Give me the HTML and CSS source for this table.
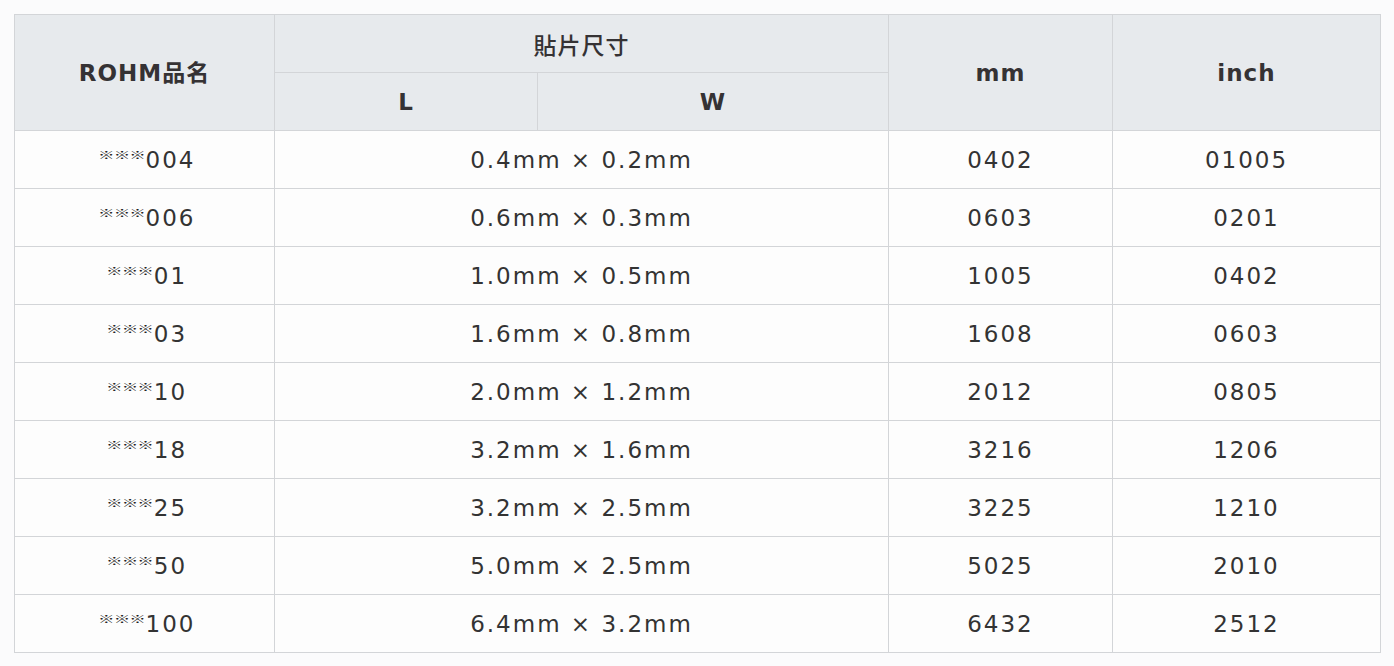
FILE: index.html
```html
<!DOCTYPE html>
<html lang="zh">
<head>
<meta charset="utf-8">
<title>ROHM 贴片尺寸</title>
<link rel="stylesheet" href="styles.css">
</head>
<body>
<table class="size-table">
  <colgroup>
    <col class="c-name">
    <col class="c-l">
    <col class="c-w">
    <col class="c-mm">
    <col class="c-inch">
  </colgroup>
  <thead>
    <tr class="hrow1">
      <th rowspan="2">ROHM品名</th>
      <th colspan="2" class="group">貼片尺寸</th>
      <th rowspan="2">mm</th>
      <th rowspan="2">inch</th>
    </tr>
    <tr class="hrow2">
      <th>L</th>
      <th>W</th>
    </tr>
  </thead>
  <tbody>
    <tr><td><span class="mark">※※※</span>004</td><td colspan="2">0.4mm × 0.2mm</td><td>0402</td><td>01005</td></tr>
    <tr><td><span class="mark">※※※</span>006</td><td colspan="2">0.6mm × 0.3mm</td><td>0603</td><td>0201</td></tr>
    <tr><td><span class="mark">※※※</span>01</td><td colspan="2">1.0mm × 0.5mm</td><td>1005</td><td>0402</td></tr>
    <tr><td><span class="mark">※※※</span>03</td><td colspan="2">1.6mm × 0.8mm</td><td>1608</td><td>0603</td></tr>
    <tr><td><span class="mark">※※※</span>10</td><td colspan="2">2.0mm × 1.2mm</td><td>2012</td><td>0805</td></tr>
    <tr><td><span class="mark">※※※</span>18</td><td colspan="2">3.2mm × 1.6mm</td><td>3216</td><td>1206</td></tr>
    <tr><td><span class="mark">※※※</span>25</td><td colspan="2">3.2mm × 2.5mm</td><td>3225</td><td>1210</td></tr>
    <tr><td><span class="mark">※※※</span>50</td><td colspan="2">5.0mm × 2.5mm</td><td>5025</td><td>2010</td></tr>
    <tr><td><span class="mark">※※※</span>100</td><td colspan="2">6.4mm × 3.2mm</td><td>6432</td><td>2512</td></tr>
  </tbody>
</table>
</body>
</html>
```

FILE: styles.css
```css
html, body {
  margin: 0;
  padding: 0;
  background: #fbfbfc;
}
body {
  padding: 14px;
  font-family: "DejaVu Sans", "Noto Sans CJK TC", sans-serif;
  color: #333;
}
.size-table {
  border-collapse: collapse;
  table-layout: fixed;
  width: 1366px;
}
.c-name { width: 260px; }
.c-l { width: 263px; }
.c-w { width: 351px; }
.c-mm { width: 224px; }
.c-inch { width: 268px; }

.size-table th,
.size-table td {
  border: 1px solid #d3d5d8;
  text-align: center;
  vertical-align: middle;
  padding: 0;
}
.size-table th {
  background: #e7eaed;
  font-weight: bold;
  font-size: 23px;
  line-height: 28px;
  letter-spacing: 1px;
  color: #353234;
}
.hrow1 th { height: 57px; }
.hrow2 th { height: 57px; }
.hrow1 .group {
  font-weight: 500;
  font-family: "Noto Sans CJK TC", sans-serif;
  letter-spacing: 1px;
}
.size-table td {
  background: #fdfdfd;
  height: 57px;
  font-size: 23px;
  line-height: 28px;
  letter-spacing: 2px;
  color: #333;
}
.mark {
  display: inline-block;
  font-family: "Noto Sans CJK TC", sans-serif;
  font-size: 18px;
  line-height: 16px;
  font-weight: bold;
  letter-spacing: -1px;
  color: #222;
  transform: scale(0.92, 0.6);
  transform-origin: right center;
  vertical-align: 6px;
  margin-right: 1px;
}
```
